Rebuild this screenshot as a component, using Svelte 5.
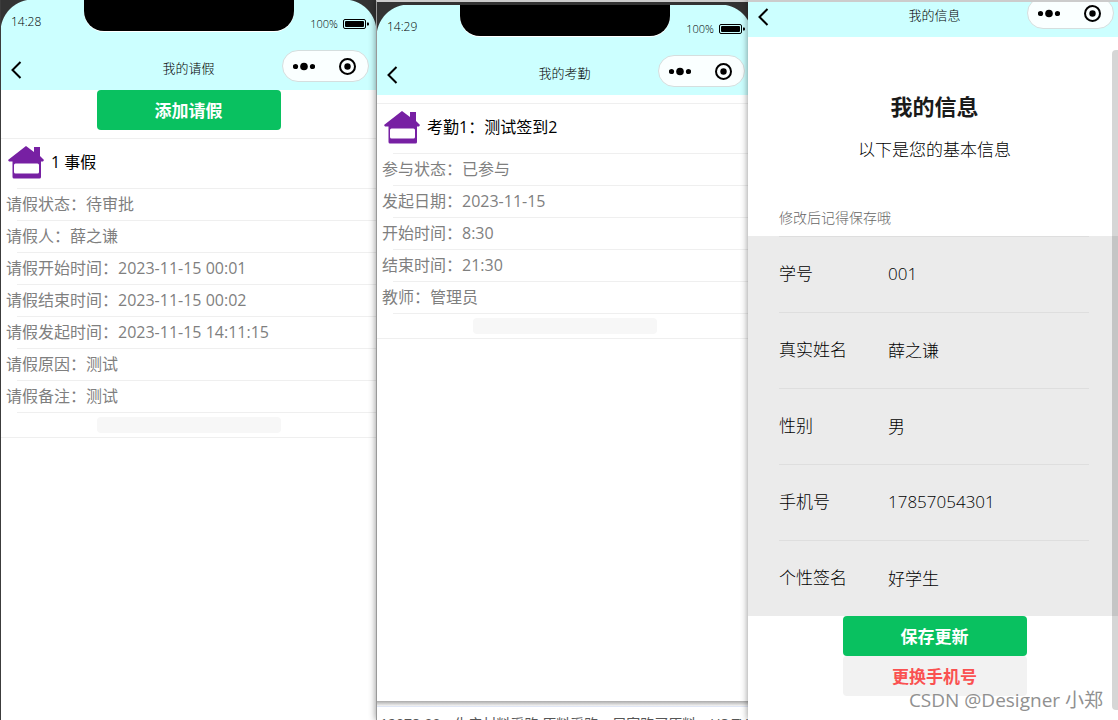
<script>
  const leave = {
    time: "14:28",
    nav: "我的请假",
    title: "1 事假",
    rows: [
      "请假状态：待审批",
      "请假人：薛之谦",
      "请假开始时间：2023-11-15 00:01",
      "请假结束时间：2023-11-15 00:02",
      "请假发起时间：2023-11-15 14:11:15",
      "请假原因：测试",
      "请假备注：测试",
    ],
  };

  const attendance = {
    time: "14:29",
    nav: "我的考勤",
    title: "考勤1：测试签到2",
    rows: [
      "参与状态：已参与",
      "发起日期：2023-11-15",
      "开始时间：8:30",
      "结束时间：21:30",
      "教师：管理员",
    ],
  };

  let fields = $state([
    { id: "number", label: "学号", value: "001" },
    { id: "name", label: "真实姓名", value: "薛之谦" },
    { id: "gender", label: "性别", value: "男" },
    { id: "phone", label: "手机号", value: "17857054301" },
    { id: "signature", label: "个性签名", value: "好学生" },
  ]);
</script>

{#snippet statusBar(time)}
  <div class="status">
    <span class="time">{time}</span>
    <div class="notch"></div>
    <div class="power">
      <span>100%</span>
      <svg width="26" height="11" viewBox="0 0 26 11">
        <rect x="0.5" y="0.5" width="22" height="9" rx="1.5" fill="none" stroke="#000" />
        <rect x="2" y="2" width="19" height="6" rx="1" />
        <path d="M24 3.5h1a1 1 0 0 1 1 1v1a1 1 0 0 1-1 1h-1z" />
      </svg>
    </div>
  </div>
{/snippet}

{#snippet navBar(title)}
  <nav class="nav">
    <button class="back" aria-label="返回">
      <svg width="12" height="18" viewBox="0 0 12 18">
        <path d="M10.500 1L2.500 9l8 8" fill="none" stroke="#000" stroke-width="2" />
      </svg>
    </button>
    <span class="nav-title">{title}</span>
    <div class="capsule">
      <button aria-label="更多">
        <svg width="22" height="18" viewBox="0 0 22 18">
          <circle cx="2.5" cy="9.5" r="2.6" />
          <circle cx="11" cy="9.5" r="3.8" />
          <circle cx="19.5" cy="9.5" r="2.6" />
        </svg>
      </button>
      <button aria-label="关闭">
        <svg width="18" height="18" viewBox="0 0 18 18">
          <circle cx="9.5" cy="9.5" r="7.5" fill="none" stroke="#000" stroke-width="2" />
          <circle cx="9.5" cy="9.5" r="3.2" />
        </svg>
      </button>
    </div>
  </nav>
{/snippet}

{#snippet record(item)}
  <div class="cells">
    <div class="cell-title">
      <svg width="36" height="33" viewBox="0 0 36 33" fill="#7720a3">
        <path
          fill-rule="evenodd"
          d="M18 0L26 6V1h6v9l4 4-1 1.500h-2V31a1.500 1.500 0 0 1-1.500 1.500H6A1.500 1.500 0 0 1 4.500 31V15.500H1L0 14zM7.500 17.500A1.500 1.500 0 0 0 6 19v7a1.500 1.500 0 0 0 1.500 1.500h22A1.500 1.500 0 0 0 31 26v-7a1.500 1.500 0 0 0-1.500-1.500z"
        />
      </svg>
      <span>{item.title}</span>
    </div>
    {#each item.rows as row}
      <div class="cell">
        <p>{row}</p>
      </div>
    {/each}
    <div class="cell cell-action">
      <button class="blank" aria-label="操作" disabled></button>
    </div>
  </div>
{/snippet}

<div class="board">
  <section class="panel first">
    <div class="phone">
      <header class="top">
        {@render statusBar(leave.time)}
        {@render navBar(leave.nav)}
      </header>
      <button class="btn primary">添加请假</button>
      {@render record(leave)}
    </div>
  </section>

  <section class="panel second">
    <div class="window">
      <div class="phone">
        <header class="top">
          {@render statusBar(attendance.time)}
          {@render navBar(attendance.nav)}
        </header>
        {@render record(attendance)}
      </div>
    </div>
    <div class="behind">
      <p>12078-90&emsp;生产材料采购 原料采购，居家购买原料，US TV</p>
    </div>
  </section>

  <section class="panel third">
    <div class="phone">
      <header class="top short">
        {@render navBar("我的信息")}
      </header>
      <form class="form" onsubmit={(e) => e.preventDefault()}>
        <h1>我的信息</h1>
        <p class="desc">以下是您的基本信息</p>
        <p class="tip">修改后记得保存哦</p>
        <div class="fields">
          {#each fields as field}
            <div class="field">
              <label for={field.id}>{field.label}</label>
              <input id={field.id} type="text" bind:value={field.value} />
            </div>
          {/each}
        </div>
        <button class="btn primary">保存更新</button>
        <button class="btn warn" type="button">更换手机号</button>
      </form>
    </div>
    <div class="scrollbar"></div>
    <span class="watermark">CSDN @Designer 小郑</span>
  </section>
</div>

<style>
  :global(body) {
    background: #fff;
  }

  .board {
    display: grid;
    grid-template-columns: 376fr 372fr 370fr;
    height: 100vh;
    overflow: hidden;
    font-family: "Open Sans", "Noto Sans CJK SC", sans-serif;
    color: #000;
  }

  p,
  h1 {
    margin: 0;
  }

  button {
    display: flex;
    align-items: center;
    justify-content: center;
    border: 0;
    padding: 0;
    background: none;
    font-family: inherit;
    color: inherit;
  }

  .panel {
    position: relative;
    min-width: 0;
    background: #fff;
    box-shadow: 0 0 7px rgba(0, 0, 0, 0.45);
    clip-path: inset(0 0 0 -8px);
  }

  .first {
    border-left: 1px solid #3c3c3c;
  }

  .second {
    display: flex;
    flex-direction: column;
    border-top: 2px solid #ccc;
    border-left: 1px solid #999;
  }

  .window {
    flex: 1;
    min-height: 0;
    border-top: 3px solid #333;
    overflow: hidden;
  }

  .second .phone {
    margin-right: -4px;
  }

  .third {
    border-top: 2px solid #ccc;
    overflow: hidden;
  }

  .third .phone {
    margin-right: -3px;
  }

  .behind {
    height: 19px;
    box-sizing: border-box;
    padding-top: 5px;
    overflow: hidden;
    background: linear-gradient(#aaa, #f4f4f4 5px, #fff 6px);
  }

  .behind p {
    border-top: 1px solid #dfe6f5;
    padding: 7px 0 0 3px;
    font-size: 14px;
    line-height: 20px;
    white-space: nowrap;
    color: #555;
  }

  /* phone header */
  .top {
    display: flex;
    flex-direction: column;
    justify-content: flex-end;
    height: 90px;
    background: radial-gradient(circle at 32px 32px, #cff 32px, #333 33px) 0 0 / 32px 32px no-repeat,
      radial-gradient(circle at 0 32px, #cff 32px, #333 33px) 100% 0 / 32px 32px no-repeat,
      #cff;
  }

  .top.short {
    height: 35px;
    background: #cff;
    overflow: hidden;
  }

  .status {
    display: grid;
    grid-template-columns: 1fr 210px 1fr;
    height: 50px;
    font-weight: 300;
    line-height: 16px;
  }

  .time {
    padding: 14px 0 0 10px;
    font-size: 12px;
  }

  .notch {
    height: 31px;
    border-radius: 0 0 20px 20px;
    background: #000;
    box-shadow: 0 1px 0 #fff;
  }

  .power {
    display: flex;
    align-items: center;
    justify-content: flex-end;
    gap: 5px;
    height: 16px;
    padding: 16px 7px 0 0;
    font-size: 11px;
  }

  .nav {
    display: grid;
    grid-template-columns: 1fr auto 1fr;
    align-items: end;
    flex-shrink: 0;
    height: 40px;
  }

  .back {
    justify-self: start;
    margin: 0 0 11px 9px;
  }

  .nav-title {
    margin-bottom: 12px;
    font-size: 13px;
    font-weight: 300;
    line-height: 20px;
  }

  .capsule {
    display: flex;
    justify-self: end;
    box-sizing: border-box;
    width: 87px;
    height: 32px;
    margin: 0 7px 8px 0;
    border: 1px solid #d5dede;
    border-radius: 16px;
    background: rgba(255, 255, 255, 0.9);
  }

  .capsule button {
    flex: 1;
  }

  /* buttons */
  .btn {
    box-sizing: border-box;
    width: 184px;
    height: 40px;
    margin: 0 auto;
    padding-bottom: 2px;
    border-radius: 4px;
    font-size: 17px;
    font-weight: 700;
  }

  .primary {
    background: #09c160;
    color: #fff;
  }

  .warn {
    background: #f2f2f2;
    color: #fa5151;
  }

  /* record list */
  .cells {
    margin-top: 8px;
    border-top: 1px solid #efefef;
    border-bottom: 1px solid #efefef;
    font-size: 16px;
  }

  .cell-title {
    display: flex;
    align-items: center;
    gap: 7px;
    box-sizing: border-box;
    height: 49px;
    padding: 0 0 2px 7px;
    line-height: 24px;
  }

  .cell-title span {
    padding-bottom: 2px;
  }

  .cell {
    color: #7f7f7f;
  }

  .cell::before {
    content: "";
    display: block;
    height: 1px;
    margin-left: 16px;
    background: #efefef;
  }

  .cell p {
    padding-left: 5px;
    line-height: 31px;
    white-space: nowrap;
  }

  .blank {
    width: 184px;
    height: 16px;
    margin: 4px auto;
    border-radius: 4px;
    background: #f7f7f7;
  }

  .cell-action {
    overflow: hidden;
  }

  /* profile form */
  .form {
    padding-top: 53px;
  }

  h1 {
    font-size: 22px;
    font-weight: 700;
    line-height: 32px;
    text-align: center;
    color: #1a1a1a;
  }

  .desc {
    margin-top: 16px;
    font-size: 17px;
    font-weight: 300;
    line-height: 24px;
    text-align: center;
  }

  .tip {
    margin-top: 46px;
    padding: 0 32px 8px 31px;
    font-size: 14px;
    font-weight: 300;
    line-height: 20px;
    color: #666;
  }

  .fields {
    padding: 0 32px 0 31px;
    background: #ebebeb;
  }

  .field {
    display: flex;
    align-items: center;
    box-sizing: border-box;
    height: 76px;
    padding-bottom: 2px;
    border-top: 1px solid #dedede;
    font-size: 17px;
    font-weight: 300;
  }

  .field label {
    width: 109px;
    line-height: 24px;
  }

  .field input {
    flex: 1;
    min-width: 0;
    height: 24px;
    padding: 0;
    border: 0;
    outline: none;
    background: none;
    font: inherit;
    color: inherit;
  }

  .scrollbar {
    position: absolute;
    top: 48px;
    right: 0;
    bottom: 10px;
    width: 6px;
    border-radius: 4px 0 0 4px;
    background: rgba(0, 0, 0, 0.16);
  }

  .watermark {
    position: absolute;
    right: 15px;
    bottom: 6px;
    font-size: 19px;
    line-height: 28px;
    color: #909090;
  }
</style>
